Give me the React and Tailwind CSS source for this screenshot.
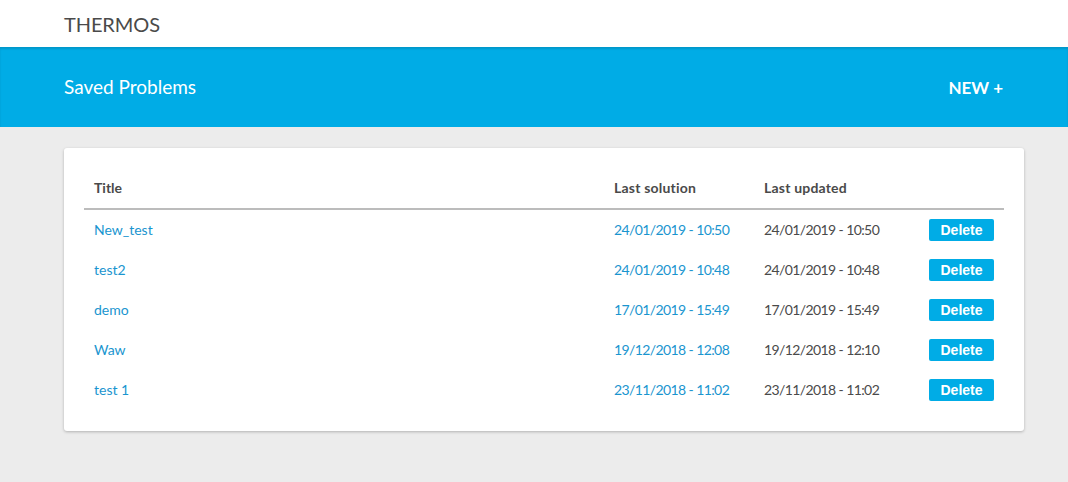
export default function App() {
  const rows = [
    ["New_test", "24/01/2019 - 10:50", "24/01/2019 - 10:50"],
    ["test2", "24/01/2019 - 10:48", "24/01/2019 - 10:48"],
    ["demo", "17/01/2019 - 15:49", "17/01/2019 - 15:49"],
    ["Waw", "19/12/2018 - 12:08", "19/12/2018 - 12:10"],
    ["test 1", "23/11/2018 - 11:02", "23/11/2018 - 11:02"],
  ];
  const font = { fontFamily: "Lato, 'Open Sans', sans-serif" };
  return (
    <div className="min-h-[482px] bg-[#ececec] text-[#4a4a4a]" style={font}>
      <div className="h-[47px] bg-white flex items-center px-[64px]">
        <span className="text-[20px] text-[#4a4a4a] tracking-[-0.1px]">THERMOS</span>
      </div>
      <div className="h-[80px] bg-[#00ace6] flex items-center justify-between pl-[64px] pr-[65px] pt-[1px] shadow-[inset_0_2px_2px_rgba(0,0,0,0.12)]">
        <span className="text-white text-[19px]">Saved Problems</span>
        <span className="text-white text-[17px] font-bold">NEW +</span>
      </div>
      <div className="pl-[64px] pr-[44px] pt-[21px]">
        <div className="bg-white rounded-[3px] shadow-[0_1px_3px_rgba(0,0,0,0.25)] px-[20px] pt-[20px] pb-[21px]">
          <div className="flex h-[42px] items-center pb-[2px] border-b-2 border-[#bcbcbc] text-[14px] font-bold text-[#4a4a4a]">
            <div className="w-[530px] shrink-0 pl-[10px]">Title</div>
            <div className="w-[150px] shrink-0 tracking-[0.2px]">Last solution</div>
            <div className="tracking-[0.2px]">Last updated</div>
          </div>
          {rows.map((r) => (
            <div key={r[0]} className="flex h-[40px] items-center text-[14px]">
              <div className="w-[530px] shrink-0 pl-[10px] pb-[2px] text-[#1a95cf]">{r[0]}</div>
              <div className="w-[150px] shrink-0 pb-[2px] text-[#1a95cf] tracking-[-0.6px]">{r[1]}</div>
              <div className="w-[165px] shrink-0 pb-[2px] text-[#4a4a4a] tracking-[-0.6px]">{r[2]}</div>
              <button
                className="w-[65px] h-[22px] shrink-0 rounded-[2px] bg-[#00ace6] text-white text-[14px] font-bold"
                style={{ fontFamily: "'Liberation Sans', Arial, sans-serif" }}
              >
                Delete
              </button>
            </div>
          ))}
        </div>
      </div>
    </div>
  );
}
